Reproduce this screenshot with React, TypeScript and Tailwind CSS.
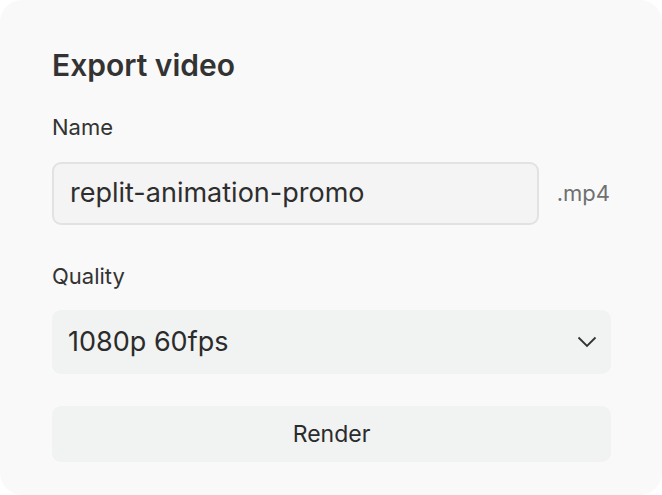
import React from "react";

const ChevronDown = () => (
  <svg width="20" height="12" viewBox="0 0 20 12" fill="none" stroke="#333" strokeWidth="1.8">
    <path d="M1.5 1.5 L10 10 L18.5 1.5" />
  </svg>
);

export default function App() {
  return (
    <div className="w-[662px] h-[495px] bg-white" style={{ fontFamily: "Inter, 'Liberation Sans', sans-serif" }}>
      <div className="w-full h-full rounded-[22px] bg-[#f9f9f9] px-[52px] pt-[45px] text-[#2b2b2b]">
        <h1 className="text-[30px] leading-[40px] font-semibold text-[#333]">Export video</h1>
        <label className="block mt-[27px] text-[22px] leading-[30px] text-[#333]">Name</label>
        <div className="mt-[20px] flex items-center gap-[18px]">
          <div className="w-[487px] h-[63px] rounded-[9px] border-2 border-[#e2e2e2] bg-[#f4f4f4] flex items-center px-[16px] text-[27px] text-[#2e2e2e]">
            replit-animation-promo
          </div>
          <span className="text-[22px] text-[#707070]">.mp4</span>
        </div>
        <label className="block mt-[36px] text-[22px] leading-[30px] text-[#333]">Quality</label>
        <div className="mt-[19px] w-[559px] h-[64px] rounded-[9px] bg-[#f1f2f2] flex items-center justify-between pl-[16px] pr-[14px] text-[27px] text-[#2b2b2b]">
          <span>1080p 60fps</span>
          <ChevronDown />
        </div>
        <button className="mt-[32px] w-[559px] h-[56px] rounded-[9px] bg-[#f1f2f2] text-[23px] text-[#2b2b2b]">
          Render
        </button>
      </div>
    </div>
  );
}
